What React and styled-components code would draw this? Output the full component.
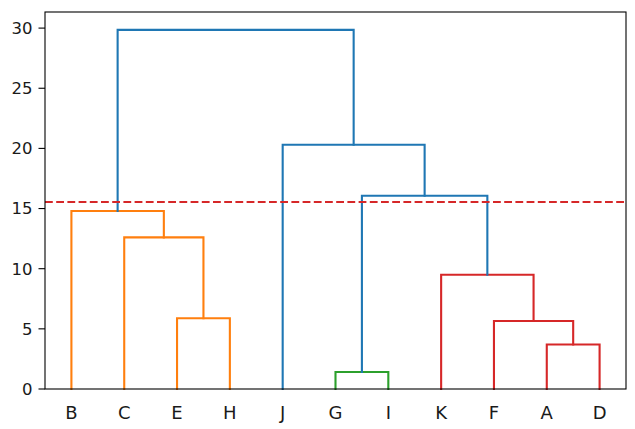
import React from 'react';
import styled, { createGlobalStyle } from 'styled-components';

const GlobalStyle = createGlobalStyle`
  html, body {
    margin: 0;
    padding: 0;
    background: #ffffff;
  }
  body {
    font-family: "DejaVu Sans", "Liberation Sans", sans-serif;
  }
`;

const Figure = styled.div`
  width: 635px;
  height: 429px;
  background: #ffffff;
  display: flex;
`;

const Chart = styled.svg`
  display: block;
  width: 635px;
  height: 429px;
  font-family: "DejaVu Sans", "Liberation Sans", sans-serif;
`;

const TickLabel = styled.text`
  fill: #1a1a1a;
  font-size: ${(p) => (p.$leaf ? '18px' : '16.5px')};
`;

// axes box in pixels
const AX = { left: 45, right: 626, top: 12, bottom: 389 };
const XMAX = 110;
const YPX = 12.03; // pixels per unit of distance

const px = (u) => AX.left + (u * (AX.right - AX.left)) / XMAX;
const py = (v) => AX.bottom - v * YPX;

const COLORS = {
  blue: '#1f77b4',
  orange: '#ff7f0e',
  green: '#2ca02c',
  red: '#d62728',
};

const leaves = ['B', 'C', 'E', 'H', 'J', 'G', 'I', 'K', 'F', 'A', 'D'];

// each link: left leg (x, h), right leg (x, h), merge height, colour
const links = [
  { x1: 25, h1: 0, x2: 35, h2: 0, h: 5.88, c: 'orange' },
  { x1: 15, h1: 0, x2: 30, h2: 5.88, h: 12.6, c: 'orange' },
  { x1: 5, h1: 0, x2: 22.5, h2: 12.6, h: 14.8, c: 'orange' },
  { x1: 95, h1: 0, x2: 105, h2: 0, h: 3.7, c: 'red' },
  { x1: 85, h1: 0, x2: 100, h2: 3.7, h: 5.65, c: 'red' },
  { x1: 75, h1: 0, x2: 92.5, h2: 5.65, h: 9.5, c: 'red' },
  { x1: 55, h1: 0, x2: 65, h2: 0, h: 1.41, c: 'green' },
  { x1: 60, h1: 1.41, x2: 83.75, h2: 9.5, h: 16.07, c: 'blue' },
  { x1: 45, h1: 0, x2: 71.875, h2: 16.07, h: 20.3, c: 'blue' },
  { x1: 13.75, h1: 14.8, x2: 58.4375, h2: 20.3, h: 29.85, c: 'blue' },
];

const yTicks = [0, 5, 10, 15, 20, 25, 30];

function Link({ x1, h1, x2, h2, h, c }) {
  const d = `M${px(x1)} ${py(h1)} V${py(h)} H${px(x2)} V${py(h2)}`;
  return (
    <path
      d={d}
      fill="none"
      stroke={COLORS[c]}
      strokeWidth="2.1"
      strokeLinejoin="miter"
      strokeLinecap="square"
    />
  );
}

function Dendrogram() {
  return (
    <Chart viewBox="0 0 635 429">
      {links.map((l, i) => (
        <Link key={i} {...l} />
      ))}

      <line
        x1={AX.left}
        x2={AX.right}
        y1={py(15.55)}
        y2={py(15.55)}
        stroke={COLORS.red}
        strokeWidth="2.1"
        strokeDasharray="7.8 3.4"
      />

      <rect
        x={AX.left}
        y={AX.top}
        width={AX.right - AX.left}
        height={AX.bottom - AX.top}
        fill="none"
        stroke="#000"
        strokeWidth="1.1"
      />

      {yTicks.map((t) => (
        <g key={t}>
          <line x1={AX.left - 6.5} x2={AX.left} y1={py(t)} y2={py(t)} stroke="#000" strokeWidth="1.1" />
          <TickLabel x={AX.left - 12.5} y={py(t)} dy="0.36em" textAnchor="end">
            {t}
          </TickLabel>
        </g>
      ))}

      {leaves.map((name, i) => (
        <TickLabel $leaf key={name} x={px(5 + i * 10)} y={419} textAnchor="middle">
          {name}
        </TickLabel>
      ))}
    </Chart>
  );
}

export default function App() {
  return (
    <>
      <GlobalStyle />
      <Figure>
        <Dendrogram />
      </Figure>
    </>
  );
}
